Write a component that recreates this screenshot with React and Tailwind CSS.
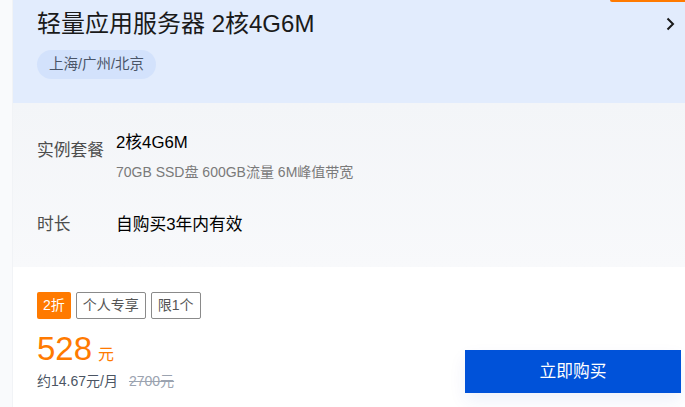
import React from "react";

const FONT = { fontFamily: '"Liberation Sans", "Noto Sans CJK SC", sans-serif' };

export default function App() {
  return (
    <div
      className="relative flex w-[685px] h-[407px] overflow-hidden bg-[#f8f9fb]"
      style={FONT}
    >
      <div className="w-[13px] shrink-0 bg-[#f9fafc] border-r border-[#f1f3f6]" />
      <div className="flex-1 flex flex-col bg-white">
        {/* header */}
        <div className="h-[103px] shrink-0 bg-[#e2ecfd] pl-[24px] pr-[10px] pt-[8px]">
          <div className="flex items-center justify-between">
            <div className="text-[24px] leading-[32px] text-[#1a1a1a]">
              轻量应用服务器 2核4G6M
            </div>
            <svg width="9" height="14" viewBox="0 0 9 14">
              <polyline
                points="1.5,1.5 7,7 1.5,12.5"
                fill="none"
                stroke="#1a1a1a"
                strokeWidth="2"
              />
            </svg>
          </div>
          <div className="mt-[10px] inline-flex h-[29px] items-center rounded-full bg-[#d3e2fc] px-[12px] text-[14.5px] text-[#4a5568]">
            上海/广州/北京
          </div>
        </div>

        {/* details */}
        <div className="h-[164px] shrink-0 bg-gradient-to-b from-[#f3f5f8] to-[#f8f9fb] pl-[24px] pt-[29px]">
          <div className="flex">
            <div className="w-[79px] shrink-0 pt-[8px] text-[16.75px] leading-[22px] text-[#4d4d4d]">
              实例套餐
            </div>
            <div>
              <div className="text-[16.75px] leading-[22px] text-black">2核4G6M</div>
              <div className="mt-[8px] text-[14px] leading-[20px] text-[#7a7a7a]">
                70GB SSD盘 600GB流量 6M峰值带宽
              </div>
            </div>
          </div>
          <div className="mt-[32px] flex">
            <div className="w-[79px] shrink-0 text-[16.75px] leading-[22px] text-[#4d4d4d]">
              时长
            </div>
            <div className="text-[16.75px] leading-[22px] text-black">自购买3年内有效</div>
          </div>
        </div>

        {/* price */}
        <div className="flex flex-1 items-start justify-between bg-white pl-[24px] pr-[4px] pt-[25px]">
          <div>
            <div className="flex gap-[5px]">
              <span className="flex h-[27px] items-center rounded-[2px] bg-[#ff7a00] px-[6px] text-[14px] text-white">
                2折
              </span>
              <span className="flex h-[27px] items-center rounded-[2px] border border-[#8a8a8a] px-[6px] text-[14px] text-[#555]">
                个人专享
              </span>
              <span className="flex h-[27px] items-center rounded-[2px] border border-[#8a8a8a] px-[6px] text-[14px] text-[#555]">
                限1个
              </span>
            </div>
            <div className="mt-[10px] flex items-baseline text-[#ff7a00]">
              <span className="text-[33px] leading-[40px]">528</span>
              <span className="ml-[6px] text-[16px]">元</span>
            </div>
            <div className="mt-[2px] flex text-[14px] leading-[20px]">
              <span className="text-[#4b5563]">约14.67元/月</span>
              <span className="ml-[11px] text-[#9ba3b0] line-through">2700元</span>
            </div>
          </div>
          <button className="mt-[58px] flex h-[43px] w-[216px] items-center justify-center bg-[#0052d9] text-[16.75px] text-white shadow-[0_8px_18px_rgba(0,60,180,0.07)]">
            立即购买
          </button>
        </div>
      </div>
      <div className="absolute left-[610px] top-0 h-[2px] w-[80px] rounded-bl-[3px] bg-[#ff7a00]" />
    </div>
  );
}
